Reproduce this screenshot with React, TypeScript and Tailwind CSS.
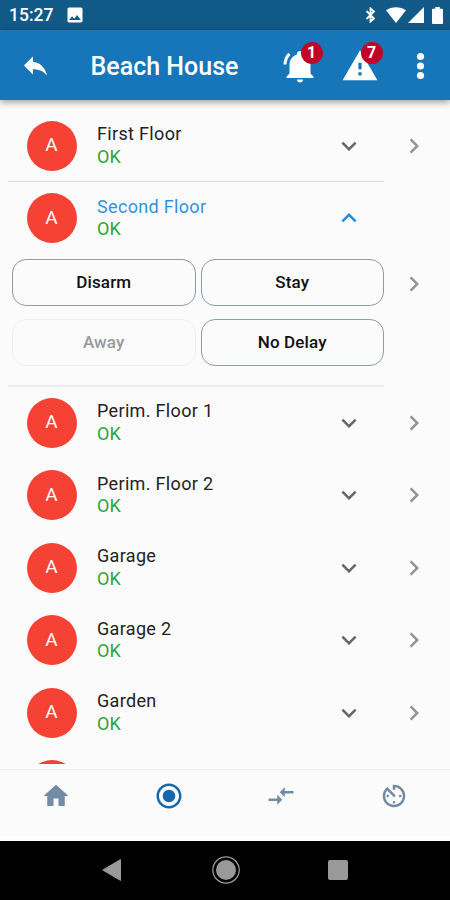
import React, { useState } from 'react';
import clsx from 'clsx';
import {
  MdAvTimer,
  MdChevronRight,
  MdCompareArrows,
  MdExpandLess,
  MdExpandMore,
  MdHome,
  MdImage,
  MdRadioButtonChecked,
  MdReply,
} from 'react-icons/md';

const areas = [
  'First Floor',
  'Second Floor',
  'Perim. Floor 1',
  'Perim. Floor 2',
  'Garage',
  'Garage 2',
  'Garden',
];

const actions = [
  { label: 'Disarm', disabled: false },
  { label: 'Stay', disabled: false },
  { label: 'Away', disabled: true },
  { label: 'No Delay', disabled: false },
];

const tabs = [
  { label: 'Home', Icon: MdHome },
  { label: 'Areas', Icon: MdRadioButtonChecked },
  { label: 'Outputs', Icon: MdCompareArrows },
  { label: 'Timers', Icon: MdAvTimer },
];

function StatusBar() {
  return (
    <div className="h-[30px] shrink-0 bg-[#115987] flex items-center pl-[9px] pr-[7px] text-white">
      <span className="text-[17.5px] leading-none font-medium w-[44px] mt-[2px] whitespace-nowrap">15:27</span>
      <MdImage className="size-5 ml-[12px]" />
      <div className="ml-auto flex items-center">
        <svg viewBox="0 0 12 16" className="w-3 h-4" fill="none" stroke="currentColor" strokeWidth="1.8">
          <path d="M1.500 4l7.500 7.500-3.500 3V1.500l3.500 3L1.500 12" />
        </svg>
        <svg viewBox="0 0 20 16" className="w-5 h-4 ml-[9px]" fill="currentColor">
          <path d="M0 3.2C5.5-.9 14.500-.9 20 3.200L10 16z" />
        </svg>
        <svg viewBox="0 0 16 16" className="size-4 ml-[2px]" fill="currentColor">
          <path d="M16 0v16H0z" />
        </svg>
        <svg viewBox="0 0 11 17" className="w-[11px] h-[17px] ml-[8px]" fill="currentColor">
          <path d="M3.200 0h4.600v1.700H10q1 0 1 1V16q0 1-1 1H1q-1 0-1-1V2.700q0-1 1-1h2.200z" />
        </svg>
      </div>
    </div>
  );
}

function BellIcon() {
  return (
    <svg viewBox="0 0 24 24" className="size-[36px]" fill="currentColor">
      <path d="M21 19v1H3v-1l2-2v-6c0-3.100 2.030-5.830 5-6.710V4a2 2 0 0 1 4 0v.29c2.970.88 5 3.610 5 6.710v6zM14 21a2 2 0 0 1-4 0zM1 11h2c0-2.400.96-4.700 2.670-6.390L4.250 3.190C2.160 5.250 1 8.070 1 11z" />
    </svg>
  );
}

function TroubleIcon() {
  return (
    <svg viewBox="0 0 24 24" className="size-[38px]" fill="currentColor">
      <path d="M13 14h-2v-4h2m0 8h-2v-2h2M1 21h22L12 2 1 21z" />
    </svg>
  );
}

function MoreIcon() {
  return (
    <svg viewBox="0 0 38 38" className="size-[38px]" fill="currentColor">
      <circle cx="19.500" cy="9.500" r="3.600" />
      <circle cx="19.500" cy="19" r="3.600" />
      <circle cx="19.500" cy="28.500" r="3.600" />
    </svg>
  );
}

function AlertButton({ count, label, children }: { count: number; label: string; children: React.ReactNode }) {
  return (
    <button aria-label={label} className="relative size-[38px] ml-[22px] flex items-center justify-center">
      {children}
      <span className="absolute -top-[5px] left-[19.5px] size-[22px] rounded-full bg-[#c00428] flex items-center justify-center text-[16px] leading-none font-bold">
        {count}
      </span>
    </button>
  );
}

function Header() {
  return (
    <header className="h-[70px] shrink-0 bg-[#1676b9] flex items-center pl-[20px] pr-[11px] pt-px text-white shadow-[0_2px_7px_rgba(0,0,0,0.4)] z-10">
      <button aria-label="Back">
        <MdReply className="size-[31px]" />
      </button>
      <h1 className="ml-[39.5px] mt-[2px] text-[25px] font-medium whitespace-nowrap">Beach House</h1>
      <div className="ml-auto flex items-center">
        <AlertButton count={1} label="Alarms">
          <BellIcon />
        </AlertButton>
        <AlertButton count={7} label="Troubles">
          <TroubleIcon />
        </AlertButton>
        <button aria-label="More" className="ml-[22px]">
          <MoreIcon />
        </button>
      </div>
    </header>
  );
}

interface AreaProps {
  name: string;
  open: boolean;
  divided: boolean;
  onToggle: () => void;
}

function Area({ name, open, divided, onToggle }: AreaProps) {
  const Arrow = open ? MdExpandLess : MdExpandMore;

  return (
    <div className="flex shrink-0 pl-2">
      <div
        className={clsx(
          'w-[376px]',
          open ? 'h-[204.5px] border-b-2 border-[#ececec]' : 'h-[72.5px] border-b',
          !open && (divided ? 'border-[#dedede]' : 'border-transparent')
        )}
      >
        <button onClick={onToggle} className="w-full h-[72px] flex items-center pl-[19px] pr-[20px] text-left">
          <span className="size-[50px] rounded-full bg-[#f64234] text-white text-[19px] flex items-center justify-center pr-px">
            A
          </span>
          <span className="ml-5 text-[18px] leading-[22.5px]">
            <span className={clsx('block tracking-[0.33px]', open ? 'text-[#2f92e8]' : 'text-[#222]')}>{name}</span>
            <span className="block text-[#2ba636]">OK</span>
          </span>
          <Arrow className={clsx('ml-auto size-[30px]', open ? 'text-[#2289e3]' : 'text-[#666]')} />
        </button>
        {open && (
          <div className="grid grid-cols-2 gap-x-[5px] gap-y-[13px] pl-[4px] pt-[5px]">
            {actions.map(({ label, disabled }) => (
              <button
                key={label}
                disabled={disabled}
                className={clsx(
                  'h-[47px] rounded-[14px] border text-[17px] font-medium tracking-[0.15px]',
                  disabled ? 'border-[#eeeff0] text-[#999]' : 'border-[#8c9cab] text-[#111]'
                )}
              >
                {label}
              </button>
            ))}
          </div>
        )}
      </div>
      <button aria-label={`Open ${name}`} className="ml-[15px] self-center">
        <MdChevronRight className="size-[30px] text-[#949494]" />
      </button>
    </div>
  );
}

export default function App() {
  const [openArea, setOpenArea] = useState<number | null>(1);
  const [activeTab, setActiveTab] = useState(1);

  return (
    <div className="w-[450px] h-[900px] overflow-hidden flex flex-col bg-[#fbfbfb] font-['Roboto',sans-serif]">
      <StatusBar />
      <Header />
      <main className="h-[664px] shrink-0 overflow-hidden pt-[9.5px] flex flex-col">
        {areas.map((name, i) => (
          <Area
            key={name}
            name={name}
            open={openArea === i}
            divided={openArea === i + 1}
            onToggle={() => setOpenArea(openArea === i ? null : i)}
          />
        ))}
        {/* top of the next area, still below the fold */}
        <div className="size-[50px] shrink-0 rounded-full bg-[#f64234] ml-[27px] mt-[11px]" />
      </main>
      <nav className="mt-[5px] h-[67px] shrink-0 border-t border-[#ededed] grid grid-cols-4 justify-items-center items-start pt-[10.5px]">
        {tabs.map(({ label, Icon }, i) => (
          <button key={label} aria-label={label} onClick={() => setActiveTab(i)}>
            <Icon className={clsx('size-[30px]', activeTab === i ? 'text-[#1468ac]' : 'text-[#728ba5]')} />
          </button>
        ))}
      </nav>
      <div className="h-[4.5px] shrink-0 bg-white" />
      <div className="flex-1 bg-black flex items-center justify-center text-[#999]">
        <svg viewBox="0 0 20 22" className="w-5 h-[22px]" fill="currentColor">
          <path d="M18.500.6v20.800L.8 11z" stroke="currentColor" strokeLinejoin="round" />
        </svg>
        <svg viewBox="0 0 30 30" className="size-[30px] ml-[88.5px]" fill="currentColor">
          <circle cx="15" cy="15" r="13.200" fill="none" stroke="currentColor" strokeWidth="1.300" />
          <circle cx="15" cy="15" r="10" />
        </svg>
        <span className="size-5 rounded-[2px] bg-[#999] ml-[87.5px]" />
      </div>
    </div>
  );
}
